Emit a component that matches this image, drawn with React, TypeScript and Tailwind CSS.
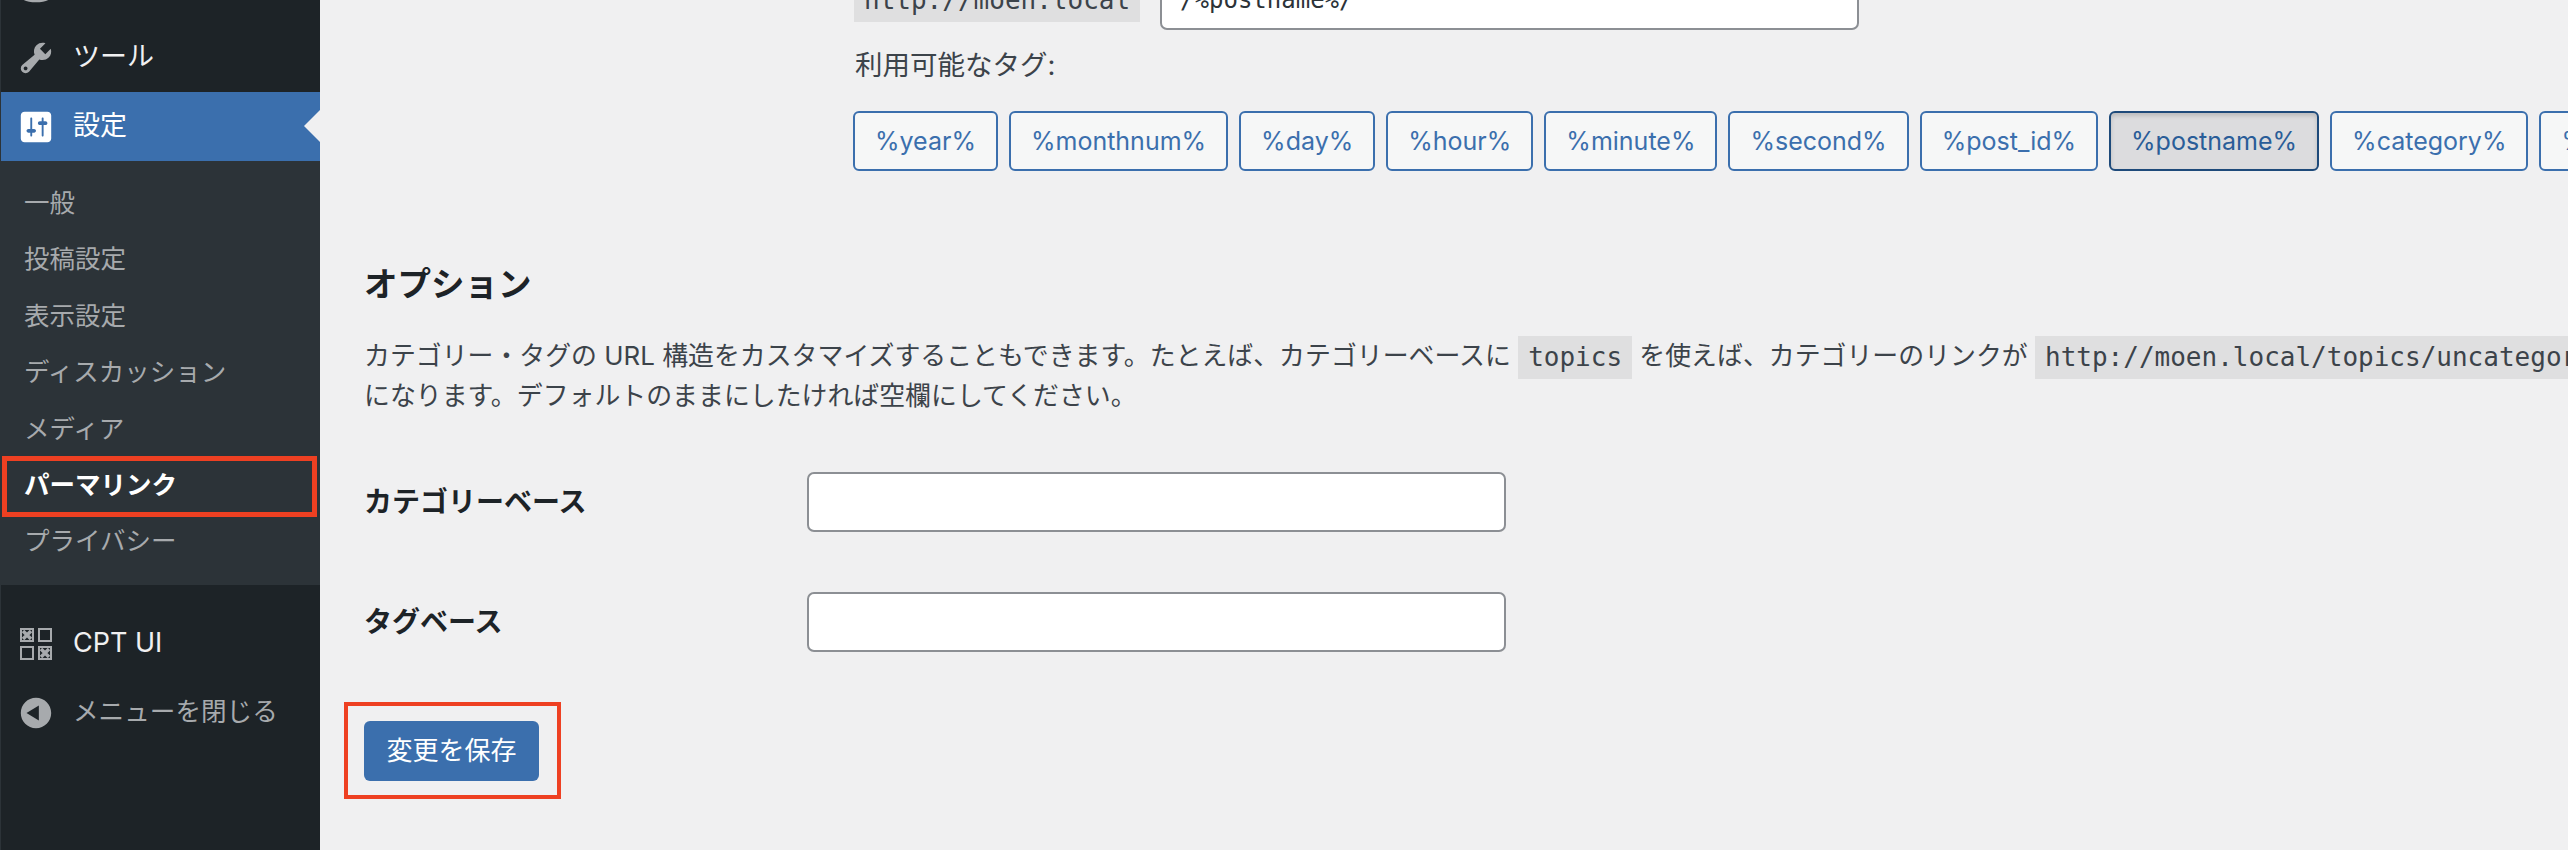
import type { ReactNode } from 'react';

const sans = 'font-["Inter","Noto_Sans_CJK_JP",sans-serif]';

const subItems = [
	{ label: '一般' },
	{ label: '投稿設定' },
	{ label: '表示設定' },
	{ label: 'ディスカッション' },
	{ label: 'メディア' },
	{ label: 'パーマリンク', current: true },
	{ label: 'プライバシー' },
];

const tags = [
	'%year%',
	'%monthnum%',
	'%day%',
	'%hour%',
	'%minute%',
	'%second%',
	'%post_id%',
	'%postname%',
	'%category%',
	'%author%',
];

function MenuIcon({ d, className }: { d: string; className: string }) {
	return (
		<svg viewBox="0 0 20 20" className={`w-[38px] h-[38px] ${className}`} fill="currentColor">
			<path d={d} />
		</svg>
	);
}

function MenuRow({
	icon,
	children,
	className = 'text-[#f0f0f1]',
	size = 'text-[27px]',
}: {
	icon: ReactNode;
	children: ReactNode;
	className?: string;
	size?: string;
}) {
	return (
		<div className={`flex items-center h-[69px] pl-[16px] gap-[18px] ${size} ${className}`}>
			{icon}
			<span>{children}</span>
		</div>
	);
}

function Code({ children }: { children: ReactNode }) {
	return (
		<code className='inline-block bg-[#dfdfe0] px-[10px] h-[43px] -my-[6px] leading-[43px] font-["DejaVu_Sans_Mono","Noto_Sans_CJK_JP",monospace] text-[26px] align-middle whitespace-nowrap'>
			{children}
		</code>
	);
}

function TextInput({ value = '' }: { value?: string }) {
	return (
		<div className='w-[699px] h-[60px] shrink-0 bg-white border-2 border-[#8c8f94] rounded-[7px] px-[18px] leading-[56px] text-[24px] text-[#2c3338] font-["DejaVu_Sans_Mono",monospace]'>
			{value}
		</div>
	);
}

export default function App() {
	return (
		<div className={`flex w-[2568px] h-[850px] overflow-hidden bg-[#f0f0f1] text-[#3c434a] ${sans}`}>
			{/* admin menu */}
			<aside className="w-[320px] h-full shrink-0 bg-[#1d2327] border-l border-[#2c3338]">
				<div className="-mt-[46px]">
					<MenuRow
						icon={
							<svg viewBox="0 0 20 20" className="w-[38px] h-[38px] text-[#a7aaad]" fill="currentColor">
								<ellipse cx="10" cy="5" rx="8" ry="3" />
								<path d="M2 6v8c0 1.700 3.600 3 8 3s8-1.300 8-3V6c0 1.700-3.600 3-8 3S2 7.700 2 6z" />
							</svg>
						}
					>
						メディア
					</MenuRow>
					<MenuRow
						icon={
							<MenuIcon
								className="text-[#a7aaad]"
								d="M16.680 9.770c-1.340 1.340-3.300 1.670-4.950.990l-5.410 6.520c-.990.990-2.590.990-3.580 0s-.990-2.590 0-3.580l6.520-5.420c-.680-1.650-.350-3.610.990-4.950 1.280-1.280 3.120-1.620 4.720-1.060l-2.890 2.890 2.820 2.820 2.860-2.870c.530 1.580.180 3.390-1.080 4.660zM3.810 16.210c.400.390 1.040.390 1.430 0 .400-.400.400-1.040 0-1.430-.390-.400-1.030-.400-1.430 0-.390.390-.390 1.030 0 1.430z"
							/>
						}
					>
						ツール
					</MenuRow>
					<div className="relative">
						<MenuRow
							className="bg-[#3b6fad] text-white"
							icon={
								<MenuIcon
									className="text-white"
									d="M18 16V4c0-1.100-.900-2-2-2H4c-1.100 0-2 .900-2 2v12c0 1.100.900 2 2 2h12c1.100 0 2-.900 2-2zM8 11h1c.550 0 1 .450 1 1s-.450 1-1 1H8v1.500c0 .280-.220.500-.500.500s-.500-.220-.500-.500V13H6c-.550 0-1-.450-1-1s.450-1 1-1h1V5.500c0-.280.220-.500.500-.500s.500.220.500.500V11zm5-2h-1c-.550 0-1-.450-1-1s.450-1 1-1h1V5.500c0-.280.220-.500.500-.500s.500.220.500.500V7h1c.550 0 1 .450 1 1s-.450 1-1 1h-1v5.500c0 .280-.220.500-.500.500s-.500-.220-.500-.500V9z"
								/>
							}
						>
							設定
						</MenuRow>
						{/* current-page notch */}
						<div className="absolute right-0 top-[18px] w-0 h-0 border-y-[16px] border-y-transparent border-r-[16px] border-r-[#f0f0f1]" />
					</div>
					<div className="bg-[#2c3338] pt-[14px] pb-[28px] h-[424px]">
						{subItems.map((item) => (
							<div
								key={item.label}
								className={`relative h-[56.4px] leading-[56.4px] pl-[23px] text-[25.5px] ${
									item.current ? 'font-bold text-white' : 'text-[#a7aaad]'
								}`}
							>
								{item.label}
								{item.current && (
									<div className="absolute left-[1px] right-[3px] top-[-1px] h-[61px] border-[5px] border-[#ee4022]" />
								)}
							</div>
						))}
					</div>
					<div className="pt-[24px]">
						<MenuRow
							icon={
								<svg viewBox="0 0 32 32" className="w-[32px] h-[32px] mx-[3px] text-[#a7aaad]" fill="none" stroke="currentColor" strokeWidth="2">
									<rect x="1" y="1" width="12" height="12" />
									<rect x="19" y="1" width="12" height="12" />
									<rect x="1" y="19" width="12" height="12" />
									<rect x="19" y="19" width="12" height="12" />
									<path d="M3 3l8 8M11 3l-8 8M21 21l8 8M29 21l-8 8" strokeWidth="3.500" />
								</svg>
							}
						>
							CPT UI
						</MenuRow>
						<MenuRow
							className="text-[#a7aaad]"
							size="text-[25.6px]"
							icon={
								<MenuIcon
									className="text-[#a7aaad]"
									d="M18 10c0-4.420-3.580-8-8-8s-8 3.580-8 8 3.580 8 8 8 8-3.580 8-8zm-6.500 4l-6.500-4 6.500-4v8z"
								/>
							}
						>
							メニューを閉じる
						</MenuRow>
					</div>
				</div>
			</aside>

			{/* permalink settings form */}
			<main className="flex-1 min-w-0 pl-[40px]">
				<div className="pl-[494px] -mt-[30px] flex items-start gap-[20px]">
					<div className="mt-[15px]">
						<Code>http://moen.local</Code>
					</div>
					<TextInput value="/%postname%/" />
				</div>
				<div className="pl-[495px] mt-[15px] text-[27.5px] leading-[40px]">利用可能なタグ:</div>
				<div className="pl-[493px] mt-[26px] flex gap-[11px] whitespace-nowrap">
					{tags.map((tag) => (
						<div
							key={tag}
							className={`h-[60px] px-[20px] shrink-0 rounded-[6px] border-2 text-[25px] leading-[56px] ${
								tag === '%postname%'
									? 'bg-[#dcdcde] border-[#1e4a7a] text-[#2a5d98] shadow-[inset_0_3px_4px_rgba(0,0,0,0.15)]'
									: 'bg-[#f6f7f7] border-[#3b6fad] text-[#3b6fad]'
							}`}
						>
							{tag}
						</div>
					))}
				</div>

				<h2 className="mt-[92px] text-[33.5px] leading-[42px] font-bold text-[#1d2327] pl-[4px]">オプション</h2>
				<div className="mt-[31px] pl-[4px] text-[25.9px] leading-[40px] whitespace-nowrap">
					<p>
						カテゴリー・タグの URL 構造をカスタマイズすることもできます。たとえば、カテゴリーベースに <Code>topics</Code> を使えば、カテゴリーのリンクが <Code>http://moen.local/topics/uncategorized/</Code> のような形式
					</p>
					<p>になります。デフォルトのままにしたければ空欄にしてください。</p>
				</div>

				<div className="mt-[56px] flex items-center h-[60px]">
					<label className="w-[447px] pl-[4px] text-[28px] font-bold text-[#1d2327]">カテゴリーベース</label>
					<TextInput />
				</div>
				<div className="mt-[60px] flex items-center h-[60px]">
					<label className="w-[447px] pl-[4px] text-[28px] font-bold text-[#1d2327]">タグベース</label>
					<TextInput />
				</div>

				<div className="relative mt-[69px] ml-[4px] w-[175px] h-[60px] rounded-[6px] bg-[#3b6fad] text-white text-[26px] leading-[60px] text-center">
					変更を保存
					<div className="absolute -left-[20px] -top-[19px] w-[217px] h-[97px] border-[4px] border-[#ee4022]" />
				</div>
			</main>
		</div>
	);
}
